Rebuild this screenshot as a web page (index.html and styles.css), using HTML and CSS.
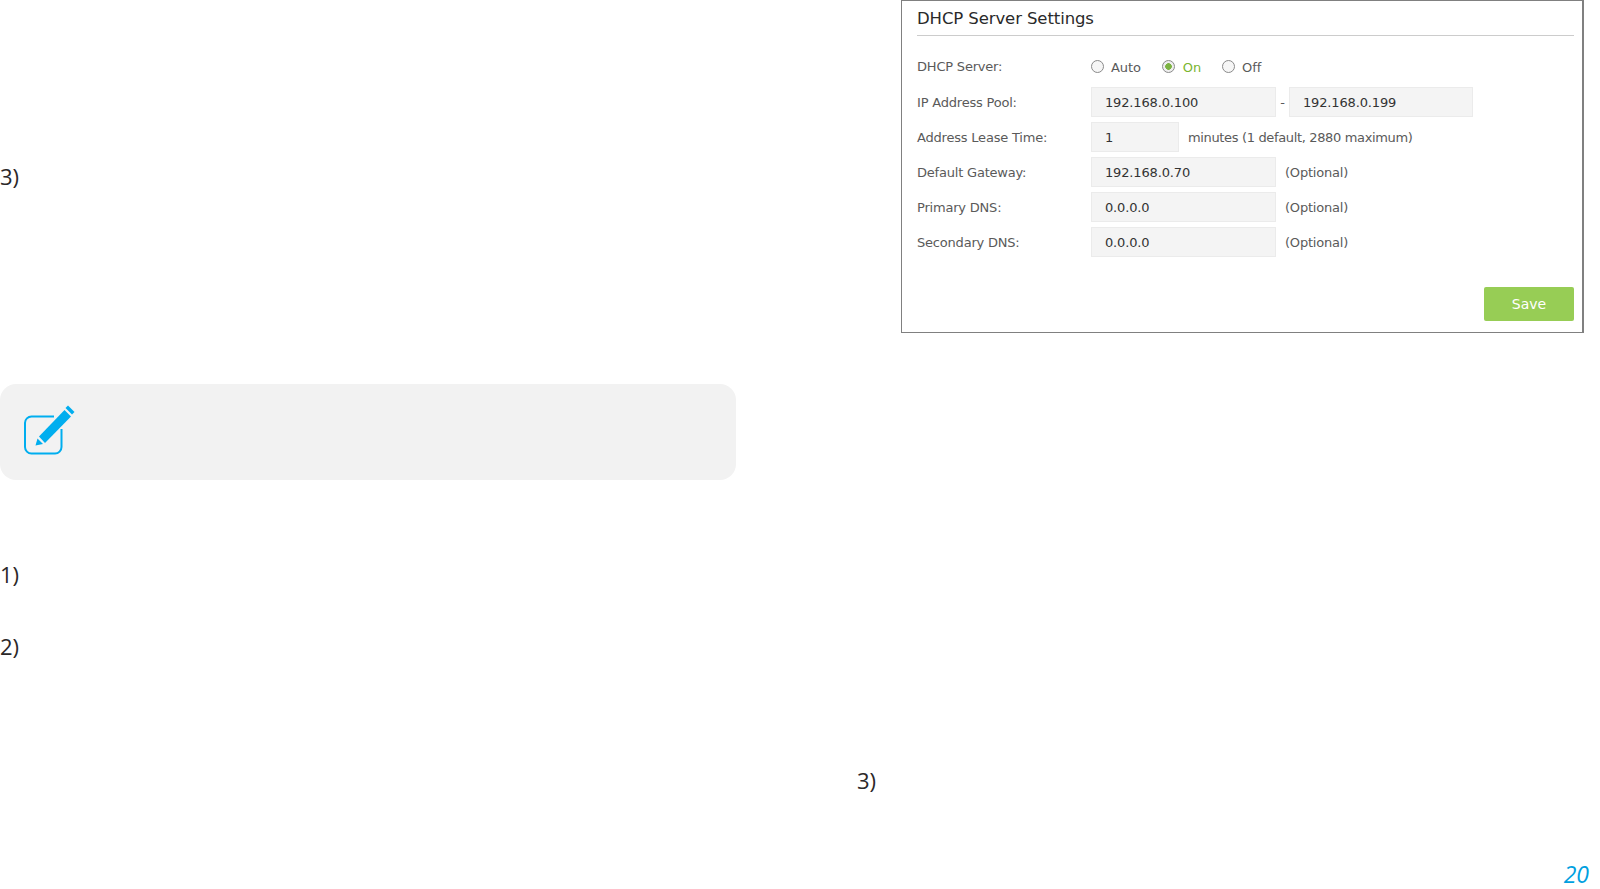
FILE: index.html
```html
<!DOCTYPE html>
<html lang="en">
<head>
<meta charset="utf-8">
<title>DHCP Server Settings</title>
<link rel="stylesheet" href="styles.css">
</head>
<body>
<main class="page">
  <section class="col-left">
    <p class="step step-a">3)</p>
    <div class="note">
      <svg class="note-icon" viewBox="20 400 60 60" width="60" height="60" aria-hidden="true">
        <path d="M54 416.500H31.500a6.500 6.500 0 0 0-6.500 6.500V447a6.500 6.500 0 0 0 6.500 6.500H55a6.500 6.500 0 0 0 6.500-6.500V429" fill="none" stroke="#00aeef" stroke-width="2"/>
        <path d="M39 436.500L64.500 410L71 416.500L45 443Z" fill="#00aeef"/>
        <path d="M68 405.500L74.500 412L72 414.500L65.500 408Z" fill="#00aeef"/>
        <path d="M35.500 445.500L37.500 438.500L43 444Z" fill="#00aeef"/>
      </svg>
    </div>
    <p class="step step-b">1)</p>
    <p class="step step-c">2)</p>
  </section>
  <section class="col-right">
    <div class="panel">
      <h2 class="panel-title">DHCP Server Settings</h2>
      <div class="rows">
        <div class="row row-radio">
          <span class="label">DHCP Server:</span>
          <span class="radio"></span><span class="radio-text gap-auto">Auto</span>
          <span class="radio radio-on"></span><span class="radio-text radio-text-on gap-on">On</span>
          <span class="radio"></span><span class="radio-text">Off</span>
        </div>
        <div class="row">
          <span class="label">IP Address Pool:</span>
          <span class="field">192.168.0.100</span>
          <span class="dash">-</span>
          <span class="field field-end">192.168.0.199</span>
        </div>
        <div class="row">
          <span class="label">Address Lease Time:</span>
          <span class="field field-short">1</span>
          <span class="hint hint-long">minutes (1 default, 2880 maximum)</span>
        </div>
        <div class="row">
          <span class="label">Default Gateway:</span>
          <span class="field">192.168.0.70</span>
          <span class="hint">(Optional)</span>
        </div>
        <div class="row">
          <span class="label">Primary DNS:</span>
          <span class="field">0.0.0.0</span>
          <span class="hint">(Optional)</span>
        </div>
        <div class="row">
          <span class="label">Secondary DNS:</span>
          <span class="field">0.0.0.0</span>
          <span class="hint">(Optional)</span>
        </div>
      </div>
      <div class="actions"><span class="save">Save</span></div>
    </div>
    <p class="step step-d">3)</p>
    <p class="page-number">20</p>
  </section>
</main>
</body>
</html>
```

FILE: styles.css
```css
* { box-sizing: border-box; }
html, body { margin: 0; padding: 0; background: #fff; }
body { width: 1600px; height: 889px; overflow: hidden; }
.page { display: grid; grid-template-columns: 857px 743px; height: 889px; }
.col-left, .col-right { display: flex; flex-direction: column; min-width: 0; }

.step {
  margin: 0;
  height: 30px;
  font: 22px/30px "Open Sans", sans-serif;
  color: #2b2829;
}
.step-a { margin-top: 161px; }
.step-b { margin-top: 79px; }
.step-c { margin-top: 42px; }
.step-d { margin-top: 432px; }

.note {
  width: 735.500px;
  height: 96px;
  margin-top: 193px;
  background: #f2f2f2;
  border-radius: 16px;
  padding: 16px 0 0 20px;
}
.note-icon { display: block; }

.panel {
  width: 683px;
  height: 333px;
  margin-left: 44px;
  border: 1px solid #808080;
  border-right-width: 2px;
  padding: 0 8px 0 15px;
  font-family: "DejaVu Sans", sans-serif;
  font-size: 13px;
  color: #5a5a5a;
}
.panel-title {
  margin: 0;
  height: 35px;
  border-bottom: 1px solid #ccc;
  font-size: 16.500px;
  font-weight: 400;
  letter-spacing: -0.1px;
  line-height: 35px;
  color: #2a2a2a;
}
.rows { display: flex; flex-direction: column; gap: 5px; margin-top: 14px; }
.row { display: flex; align-items: center; height: 30px; }
.row-radio { height: 33px; margin-bottom: -1px; }
.label { flex: 0 0 174px; letter-spacing: -0.2px; }
.field {
  flex: 0 0 185px;
  height: 30px;
  padding-left: 13px;
  background: #f4f4f4;
  border: 1px solid #ebebeb;
  color: #333;
  letter-spacing: -0.15px;
  line-height: 29px;
}
.field-short { flex-basis: 88px; }
.field-end { flex-basis: 184px; }
.dash { flex: 0 0 13px; text-align: center; }
.hint { margin-left: 9px; letter-spacing: -0.2px; }
.hint-long { margin-left: 9px; letter-spacing: -0.35px; }
.radio {
  flex: 0 0 13px;
  width: 13px;
  height: 13px;
  border: 1px solid #8a8a8a;
  border-radius: 50%;
  background: #f6f6f6;
}
.radio-on { background: radial-gradient(circle, #7cb342 0 3px, #eee 3.600px); }
.radio-text { margin-left: 7px; position: relative; top: 1px; letter-spacing: -0.1px; }
.radio-text-on { margin-left: 8px; color: #7ab52f; }
.gap-auto { margin-right: 21px; }
.gap-on { margin-right: 21px; }

.actions { display: flex; justify-content: flex-end; margin-top: 30px; }
.save {
  width: 90px;
  height: 34px;
  background: #97cd55;
  border-radius: 2px;
  color: #fff;
  font-size: 14px;
  line-height: 34px;
  text-align: center;
}

.page-number {
  margin: 64px 0 0;
  padding-right: 11px;
  height: 30px;
  font: italic 23px/30px "Open Sans", sans-serif;
  color: #00a0e0;
  text-align: right;
}
```
